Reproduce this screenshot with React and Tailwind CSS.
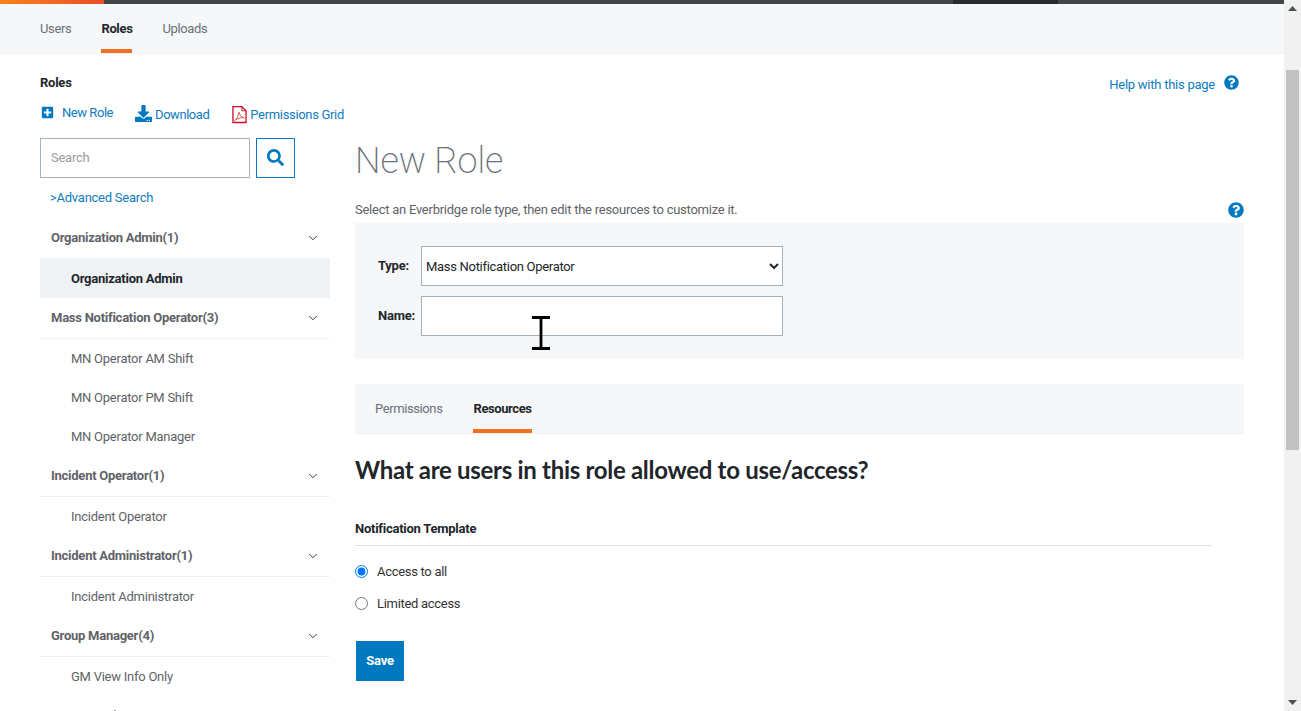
import React from "react";
import { FaPlusSquare, FaDownload, FaQuestionCircle, FaSearch } from "react-icons/fa";
import { ChevronDown } from "lucide-react";

const groups = [
  { name: "Organization Admin(1)", items: ["Organization Admin"], active: true },
  { name: "Mass Notification Operator(3)", items: ["MN Operator AM Shift", "MN Operator PM Shift", "MN Operator Manager"] },
  { name: "Incident Operator(1)", items: ["Incident Operator"] },
  { name: "Incident Administrator(1)", items: ["Incident Administrator"] },
  { name: "Group Manager(4)", items: ["GM View Info Only", "GM Update"] },
];

function PdfIcon() {
  return (
    <svg width="15" height="19" viewBox="0 0 16 19" fill="none" className="shrink-0">
      <path d="M1 1h9.500L15 5.500V18H1z" stroke="#c8102e" strokeWidth="1.4" fill="#fff" />
      <path d="M10.500 1v4.500H15" stroke="#c8102e" strokeWidth="1" />
      <path d="M3 16c2-1.500 4-5 4.500-9 .5 3 2.500 5.500 5.500 6-3-.5-7 .5-10 3z" stroke="#d9534f" strokeWidth="1" fill="none" />
    </svg>
  );
}

function Group({ g }) {
  return (
    <div>
      <div className={`flex items-center justify-between pl-[11px] pr-[10px] ${g.active ? "h-[40px]" : "h-[41px] border-b border-[#edf1f4]"}`}>
        <span className="font-bold text-[#5f6368]">{g.name}</span>
        <ChevronDown size={14} strokeWidth={1.7} className="mt-[1px] text-[#333]" />
      </div>
      {g.items.map((it) => (
        <div
          key={it}
          className={`flex items-center pl-[31px] pt-[2px] ${g.active ? "h-[40px] bg-[#eff3f6] font-bold text-[#22262a]" : "h-[39px] text-[#5f6368]"}`}
        >
          {it}
        </div>
      ))}
    </div>
  );
}

export default function App() {
  return (
    <div className="flex h-[711px] overflow-hidden bg-white text-[13px] tracking-[-0.25px] font-['Roboto',sans-serif] text-[#333]">
      <div className="relative flex-1 min-w-0 overflow-hidden">
        <div className="flex h-1 bg-[#3f4549]">
          <div className="w-[104px] bg-gradient-to-r from-[#f58220] to-[#e84e26]" />
          <div className="ml-[849px] w-[105px] bg-[#282c2f]" />
        </div>
        <div className="flex h-[50px] gap-[30px] border-b border-[#f0f1f3] bg-[#f6f7f9] pl-[40px] tracking-[-0.35px]">
          <div className="pt-[15px] text-[#6a7178]">Users</div>
          <div className="h-[49px] border-b-4 border-[#f37021] pt-[15px] font-bold text-[#22262a]">Roles</div>
          <div className="pt-[15px] text-[#6a7178]">Uploads</div>
        </div>

        <div className="flex justify-between pl-[40px] pr-[45px] pt-[19px]">
          <div>
            <div className="h-[20px] font-bold leading-[20px] text-[#22262a]">Roles</div>
            <div className="mt-[10px] flex items-start tracking-[-0.45px] text-[#0f7bc0]">
              <div className="flex items-center">
                <FaPlusSquare size={13} className="ml-[1px] text-[#0079c1]" />
                <span className="ml-[8px]">New Role</span>
              </div>
              <div className="ml-[22px] mt-[2px] flex items-center gap-[3px]">
                <FaDownload size={17} className="-mt-[3px] text-[#0079c1]" />
                <span>Download</span>
              </div>
              <div className="ml-[23px] mt-[2px] flex items-center gap-[3px]">
                <PdfIcon />
                <span className="tracking-[-0.33px]">Permissions Grid</span>
              </div>
            </div>
          </div>
          <div className="flex items-center gap-[9px] self-start pt-[2px] text-[#0f7bc0]">
            <span>Help with this page</span>
            <FaQuestionCircle size={15} className="-mt-[4px] text-[#0079c1]" />
          </div>
        </div>

        <div className="mt-[13px] flex pl-[40px]">
          <aside className="w-[290px] shrink-0">
            <div className="flex gap-[6px]">
              <input
                placeholder="Search"
                className="h-[40px] w-[210px] border border-[#a5b2bc] px-[10px] outline-none placeholder:text-[#9a9a9a]"
              />
              <button className="flex h-[40px] w-[39px] items-center justify-center border border-[#0079c1] text-[#0079c1]">
                <FaSearch size={17} />
              </button>
            </div>
            <div className="flex h-[40px] items-center pl-[10px] text-[#0f7bc0]">&gt;Advanced Search</div>
            {groups.map((g) => (
              <Group key={g.name} g={g} />
            ))}
          </aside>

          <main className="ml-[25px] w-[889px] shrink-0">
            <h1 className="mt-[1px] h-[44px] text-[36px] font-[200] leading-[44px] tracking-[-0.1px] text-[#6a7178]">New Role</h1>
            <div className="relative mt-[17px] h-[20px] leading-[20px] text-[#5f6368]">
              Select an Everbridge role type, then edit the resources to customize it.
              <FaQuestionCircle size={16} className="absolute right-0 top-[2px] text-[#0079c1]" />
            </div>
            <div className="mt-[3px] h-[136px] bg-[#f6f7f9] pl-[23px] pt-[23px]">
              <div className="flex items-center">
                <label className="w-[43px] font-bold text-[#22262a]">Type:</label>
                <select className="h-[40px] w-[362px] border border-[#a5b2bc] bg-white pt-[1px] tracking-[-0.3px] text-[#22262a] outline-none">
                  <option>Mass Notification Operator</option>
                </select>
              </div>
              <div className="mt-[10px] flex items-center">
                <label className="w-[43px] font-bold text-[#22262a]">Name:</label>
                <input className="h-[40px] w-[362px] border border-[#a5b2bc] bg-white outline-none" />
              </div>
            </div>

            <div className="mt-[25px] flex h-[50px] gap-[31px] border-b border-[#f0f1f3] bg-[#f6f7f9] pl-[20px] tracking-[-0.4px]">
              <div className="pt-[15px] text-[#6a7178]">Permissions</div>
              <div className="h-[49px] border-b-4 border-[#f37021] pt-[15px] font-bold text-[#22262a]">Resources</div>
            </div>

            <h2 className="mt-[19px] h-[34px] font-['Lato',sans-serif] text-[24px] font-bold leading-[34px] tracking-[-0.3px] text-[#22262a]">
              What are users in this role allowed to use/access?
            </h2>
            <div className="mt-[32px] h-[27px] w-[857px] border-b border-[#d9e0e6] font-bold leading-[20px] text-[#22262a]">
              Notification Template
            </div>
            <label className="mt-[16px] flex h-[20px] items-center gap-[9px] tracking-[-0.3px] text-[#333]">
              <input type="radio" name="a" defaultChecked className="m-0 h-[13px] w-[13px] accent-[#0075ff]" />
              Access to all
            </label>
            <label className="mt-[12px] flex h-[20px] items-center gap-[9px] tracking-[-0.3px] text-[#333]">
              <input type="radio" name="a" className="m-0 h-[13px] w-[13px]" />
              Limited access
            </label>
            <button className="ml-[1px] mt-[27px] h-[40px] w-[48px] bg-[#0079c1] font-bold text-white">Save</button>
          </main>
        </div>

        <svg width="20" height="36" viewBox="0 0 20 36" className="absolute left-[531px] top-[315px]">
          <path d="M1 2.500h18M1 33.500h18M10 2.500v31" stroke="#000" strokeWidth="2.800" fill="none" />
        </svg>
      </div>

      <div className="flex w-[17px] shrink-0 flex-col bg-[#f1f1f1]">
        <div className="flex h-[17px] items-center justify-center">
          <svg width="9" height="5" viewBox="0 0 9 5"><path d="M4.500 0 9 5H0z" fill="#505050" /></svg>
        </div>
        <div className="ml-[2px] mt-[53px] h-[380px] w-[13px] bg-[#c1c1c1]" />
        <div className="mt-auto flex h-[17px] items-center justify-center">
          <svg width="9" height="5" viewBox="0 0 9 5"><path d="M0 0h9L4.500 5z" fill="#505050" /></svg>
        </div>
      </div>
    </div>
  );
}
